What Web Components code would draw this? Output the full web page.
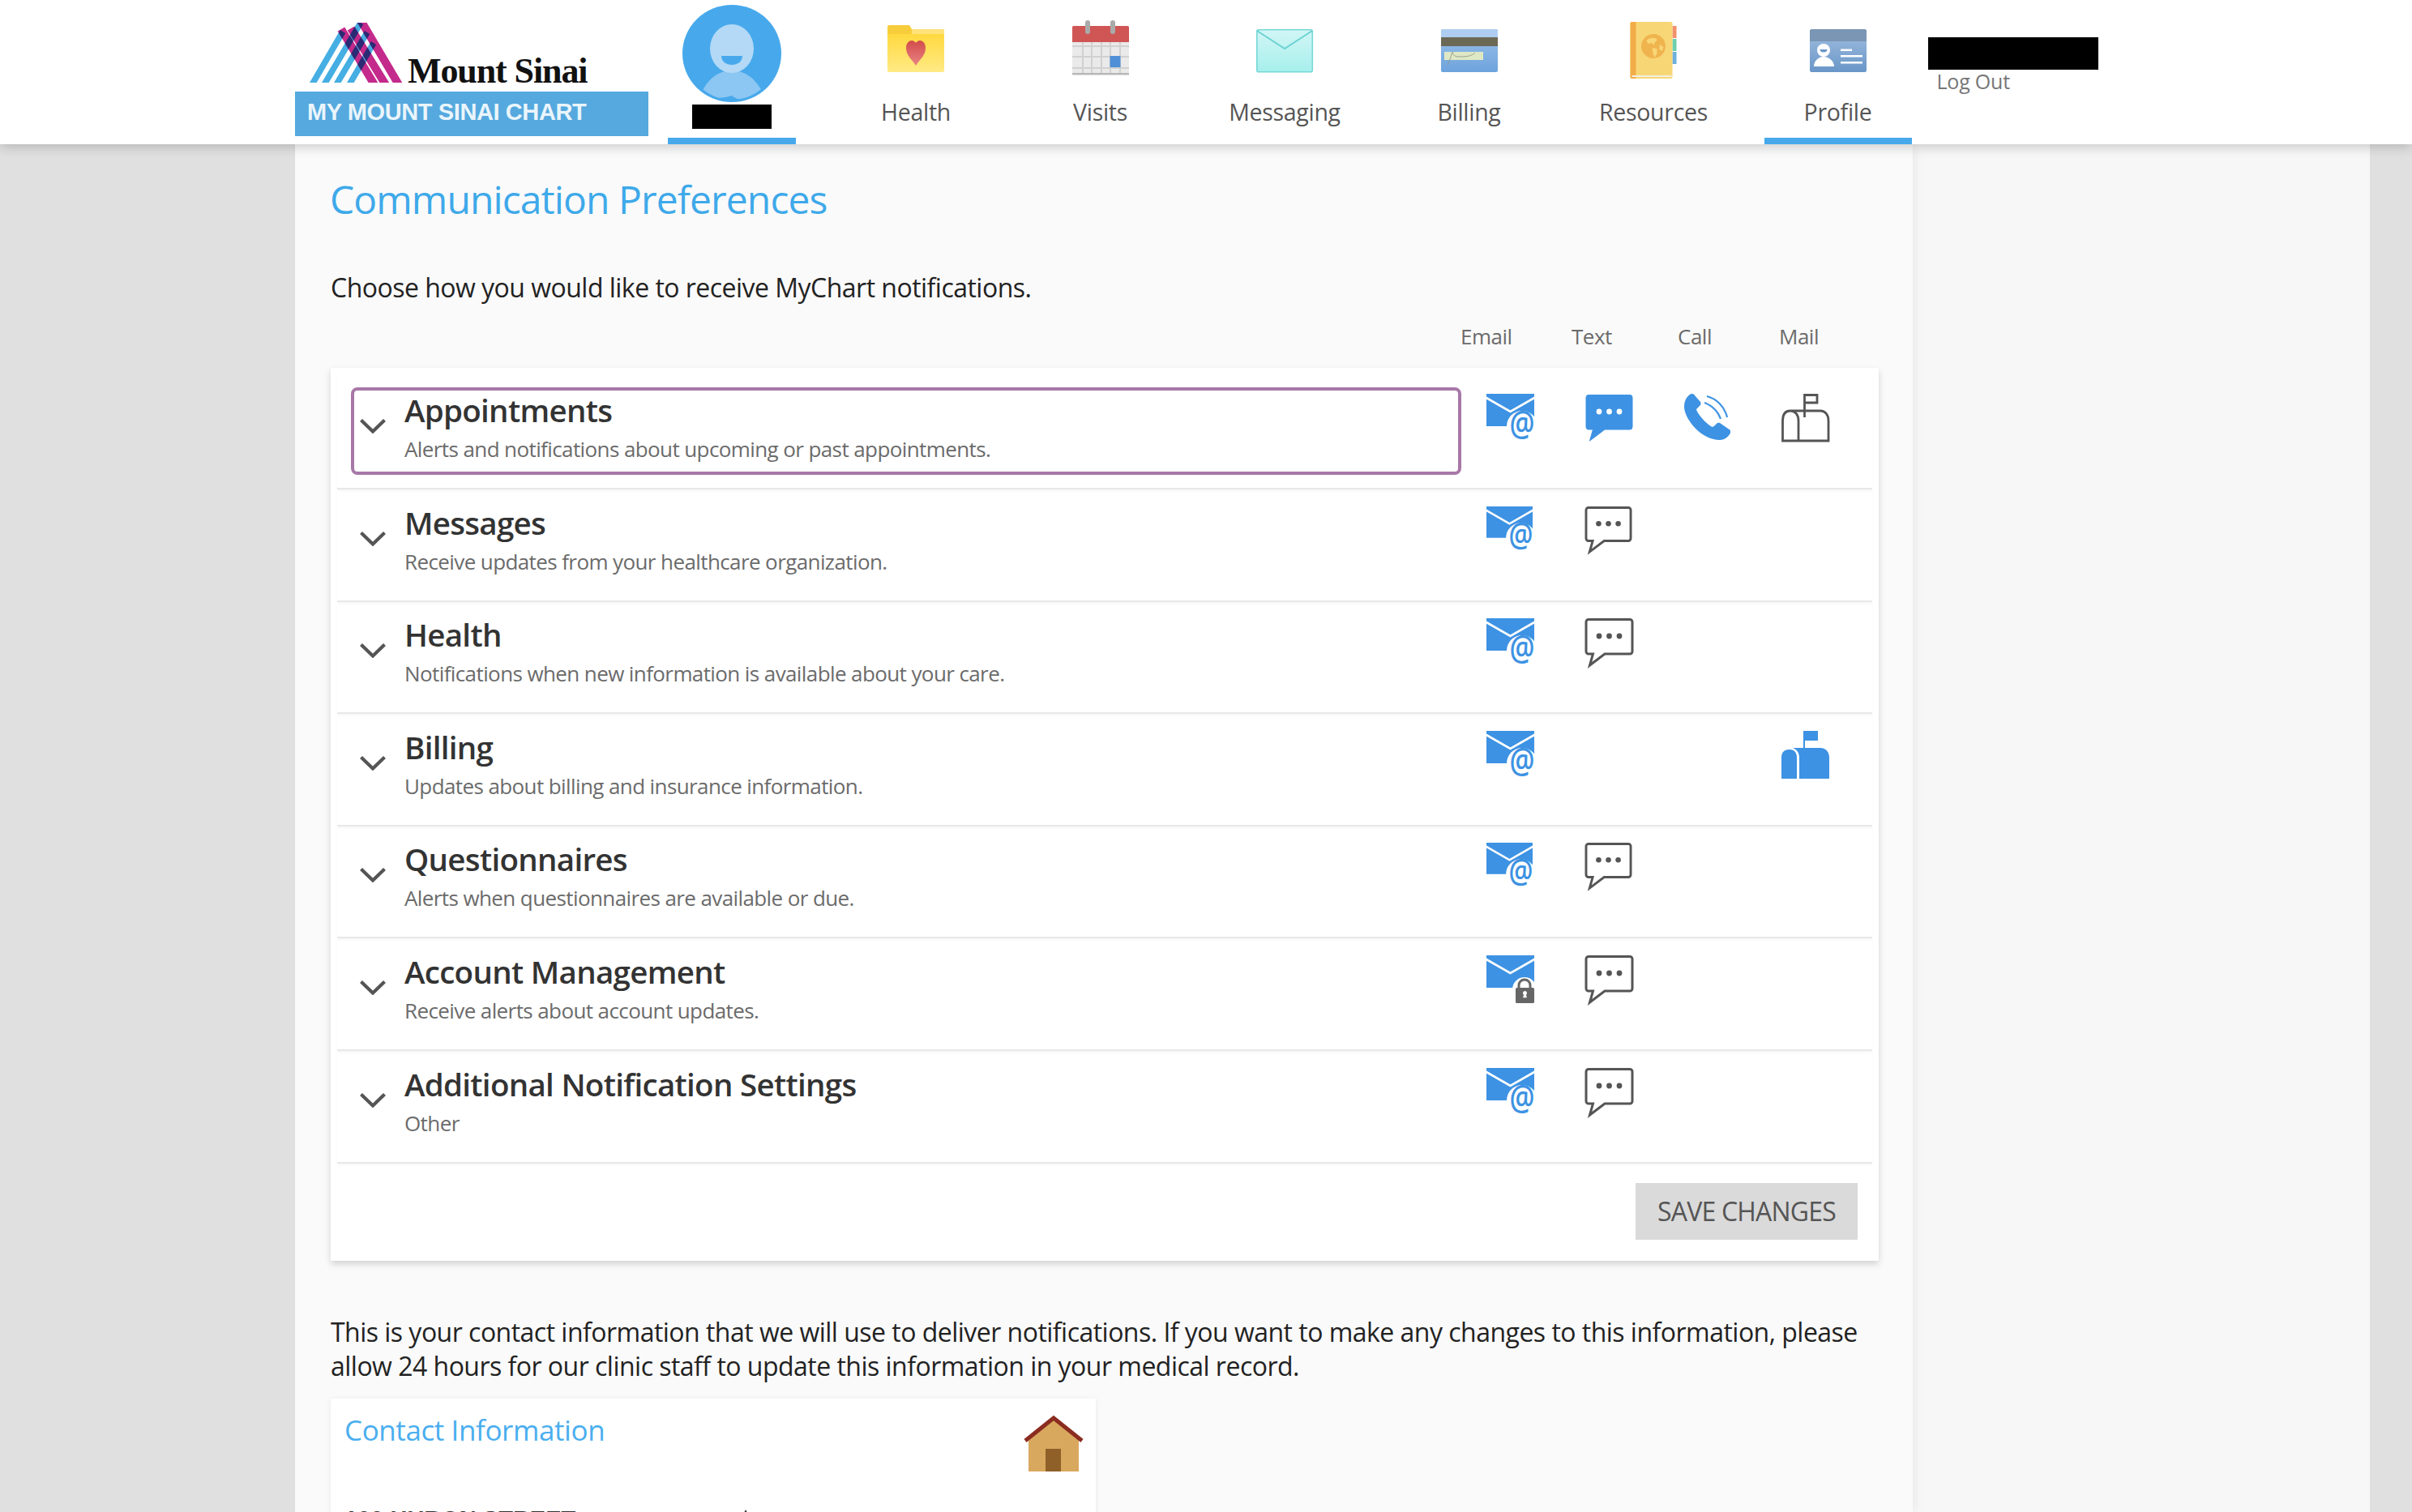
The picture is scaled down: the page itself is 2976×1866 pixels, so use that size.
<!DOCTYPE html>
<html lang="en">
<head>
<meta charset="utf-8">
<title>Communication Preferences</title>
<style>
  html, body { margin: 0; height: 1866px; overflow: hidden; background: #e0e0e0; }
  body { font-family: "Open Sans", "Liberation Sans", sans-serif; }
</style>
</head>
<body>
<mc-page>
  <mc-header slot="header"></mc-header>

  <mc-section-title>Communication Preferences</mc-section-title>
  <mc-intro>Choose how you would like to receive MyChart notifications.</mc-intro>
  <mc-channel-heads></mc-channel-heads>

  <mc-prefs-card>
    <mc-pref-row focused heading="Appointments" desc="Alerts and notifications about upcoming or past appointments." icons="email,chat-on,phone,mailbox"></mc-pref-row>
    <mc-pref-row small heading="Messages" desc="Receive updates from your healthcare organization." icons="email,chat"></mc-pref-row>
    <mc-pref-row heading="Health" desc="Notifications when new information is available about your care." icons="email,chat"></mc-pref-row>
    <mc-pref-row heading="Billing" desc="Updates about billing and insurance information." icons="email,,,mailbox-on"></mc-pref-row>
    <mc-pref-row small heading="Questionnaires" desc="Alerts when questionnaires are available or due." icons="email,chat"></mc-pref-row>
    <mc-pref-row heading="Account Management" desc="Receive alerts about account updates." icons="email-lock,chat"></mc-pref-row>
    <mc-pref-row heading="Additional Notification Settings" desc="Other" icons="email,chat"></mc-pref-row>
  </mc-prefs-card>

  <mc-note>This is your contact information that we will use to deliver notifications. If you want to make any changes to this information, please allow 24 hours for our clinic staff to update this information in your medical record.</mc-note>

  <mc-contact-card heading="Contact Information" address="100 HURON STREET"></mc-contact-card>
</mc-page>

<script>
const BLUE = '#3d92e3'
const GREY = '#555'

function envelope () {
  return `<path fill="${BLUE}" d="M0 0H59V40H0Z"/><path fill="none" stroke="#fff" stroke-width="2.6" d="M-1 4.5L29.5 22L60 4.5"/>`
}

function chatShape () {
  return 'M4 1.5H55A3 3 0 0 1 58 4.5V41A3 3 0 0 1 55 44H24L5.5 58L9.5 44H4A3 3 0 0 1 1 41V4.5A3 3 0 0 1 4 1.5Z'
}

// all channel icons share a 60x60 box
const CHANNEL_ICONS = {
  email: `${envelope()}<circle cx="44" cy="40" r="19" fill="#fff"/><text transform="translate(44 51.500) scale(.96 1.200)" text-anchor="middle" font-family="Open Sans" font-weight="600" font-size="36" fill="${BLUE}">@</text>`,
  'email-lock': `${envelope()}<circle cx="47" cy="42" r="15" fill="#fff"/><path fill="none" stroke="#666" stroke-width="3" d="M40 42V37A7 7 0 0 1 54 37V42"/><rect x="36" y="40" width="23" height="19" rx="1.5" fill="#666"/><path fill="#fff" d="M47.5 44a2.6 2.6 0 0 1 1.5 4.7l.9 3.6h-4.8l.9-3.6a2.6 2.6 0 0 1 1.5-4.7z"/>`,
  chat: `<path fill="#fff" stroke="${GREY}" stroke-width="3" d="${chatShape()}"/><circle cx="17" cy="22" r="3.4" fill="${GREY}"/><circle cx="29.5" cy="22" r="3.4" fill="${GREY}"/><circle cx="42" cy="22" r="3.4" fill="${GREY}"/>`,
  'chat-on': `<path fill="${BLUE}" stroke="${BLUE}" stroke-width="1" d="${chatShape()}"/><circle cx="17" cy="22" r="3.4" fill="#fff"/><circle cx="29.5" cy="22" r="3.4" fill="#fff"/><circle cx="42" cy="22" r="3.4" fill="#fff"/>`,
  phone: `<path fill="${BLUE}" d="M9 0C5 1 0 7 0 16C0 30 20 57 44 57C50 57 56 52 57 48L57 45L44 36C42 35 40 36 38 39L35 41C29 39 16 25 15 19L18 16C21 13 21 12 20 10L13 2C12 0 10 0 9 0Z"/><path fill="none" stroke="${BLUE}" stroke-width="2.2" d="M28 3C40 6 50 16 53 29M25 11C34 14 42 22 45 31"/>`,
  mailbox: `<path fill="none" stroke="${GREY}" stroke-width="2.8" d="M1.5 58V33C1.5 25 5 21 11 21C17 21 21 26 21 33V58ZM11 21H48C54 21 58 26 58 33V58H21M28.5 29V1.5H44V11H28.5"/>`,
  'mailbox-on': `<path fill="${BLUE}" d="M0 59V33C0 25 5 23 10 23C16 23 19 27 19 33V59ZM22 59V33C22 27 19 23 14 21H27V0H45V12H29V21H48C55 21 59 26 59 33V59Z"/>`
}

// nav icons sit on a 70x80 canvas so their tops and bottoms keep their own offsets
const NAV_ICONS = {
  health: `<defs><linearGradient id="f" x1="0" y1="0" x2="0" y2="1"><stop offset="0" stop-color="#ffd93f"/><stop offset="1" stop-color="#ffea85"/></linearGradient><linearGradient id="h" x1="0" y1="0" x2="0" y2="1"><stop offset="0" stop-color="#d24b4b"/><stop offset="1" stop-color="#ea8484"/></linearGradient></defs>
    <path fill="#f8cd3b" d="M2 11H27L30 16H68A2 2 0 0 1 70 18V28H0V13A2 2 0 0 1 2 11Z"/><path fill="url(#f)" d="M0 22H70V67A2 2 0 0 1 68 69H2A2 2 0 0 1 0 67Z"/><rect y="16" x="30" width="40" height="6" fill="#ffe27a"/>
    <path fill="url(#h)" d="M35 61C31 54 23 49 23 39C23 33 27 30 30 30C33 30 35 33 35 33C35 33 37 30 40 30C43 30 47 33 47 39C47 49 39 54 35 61Z"/>`,
  visits: `<rect x="0" y="12" width="70" height="60" fill="#eaeaea"/><path fill="#d1d1d1" d="M0 36H70V38H0ZM0 49H70V51H0ZM0 63H70V65H0ZM12 32H14V72H12ZM23 32H25V72H23ZM35 32H37V72H35ZM46 32H48V72H46ZM58 32H60V72H58Z"/><rect y="70" width="70" height="2.5" fill="#b8b8b8"/>
    <path fill="#d05656" d="M2 12H68A2 2 0 0 1 70 14V32H0V14A2 2 0 0 1 2 12Z"/><rect x="16" y="5" width="6" height="17" rx="3" fill="#aaa"/><rect x="47" y="5" width="6" height="17" rx="3" fill="#aaa"/><rect x="46.500" y="49" width="13" height="14" fill="#4f8fd6"/>`,
  messaging: `<defs><linearGradient id="e" x1="0" y1="0" x2="0" y2="1"><stop offset="0" stop-color="#d2f6f6"/><stop offset="1" stop-color="#a6efec"/></linearGradient></defs>
    <rect x=".8" y="16.800" width="68.500" height="52" rx="2" fill="url(#e)" stroke="#76d8d6" stroke-width="1.600"/><path fill="none" stroke="#6bd3d2" stroke-width="2" d="M1 18L35 40L69 18"/>`,
  billing: `<defs><linearGradient id="c" x1="0" y1="0" x2="0" y2="1"><stop offset="0" stop-color="#9cc2ec"/><stop offset="1" stop-color="#6ea3dc"/></linearGradient></defs>
    <rect y="16" width="70" height="53" rx="2" fill="url(#c)"/><path fill="#aecdf0" d="M2 16H68A2 2 0 0 1 70 18V26H0V18A2 2 0 0 1 2 16Z"/><rect y="26" width="70" height="11" fill="#6c6856"/><rect x="4" y="44" width="48" height="10" fill="#dfe8c4"/><path fill="none" stroke="#8d9a8a" stroke-width=".9" d="M8 60C12 52 13 46 14 44C15 48 16 50 24 50C32 50 38 49 42 45"/>`,
  resources: `<g transform="translate(6.500 0)"><rect x="52" y="12" width="5" height="15" fill="#f2906a"/><rect x="52" y="28" width="5" height="15" fill="#6dd0ac"/><rect x="52" y="44" width="5" height="15" fill="#6db0dc"/>
    <path fill="#f7d676" d="M2 7H50A2 2 0 0 1 52 9V75A2 2 0 0 1 50 77H2A2 2 0 0 1 0 75V9A2 2 0 0 1 2 7Z"/><path fill="#f2ad48" d="M2 7H7V77H2A2 2 0 0 1 0 75V9A2 2 0 0 1 2 7Z"/><rect x="2" y="73" width="49" height="2" fill="#f1efe6"/><circle cx="28.500" cy="37" r="15" fill="#f0b44e"/><path fill="#f7d676" d="M20 30C24 26 31 26 33 29L30 33L29 36L27 33L22 34ZM27 39L33 40L33 46L30 51L28 46ZM36 35L41 38L39 43L36 41Z"/></g>`,
  profile: `<defs><linearGradient id="p" x1="0" y1="0" x2="0" y2="1"><stop offset="0" stop-color="#a2bfe0"/><stop offset="1" stop-color="#6996c8"/></linearGradient></defs>
    <rect y="16" width="70" height="53" rx="2.500" fill="url(#p)"/><path fill="#7a96b4" d="M2.500 16H67.500A2.500 2.500 0 0 1 70 18.500V31H0V18.500A2.500 2.500 0 0 1 2.500 16Z"/>
    <circle cx="17" cy="42" r="8" fill="#fff"/><path fill="#6996c8" d="M12.500 41H21.500A4.500 3.500 0 0 1 12.500 41Z"/><path fill="#fff" d="M5 62C5 56 10 50 17 50C24 50 30 56 30 62Z"/><path fill="#fff" d="M38 40.500H52V43H38ZM38 48H65V50.500H38ZM38 56H65V58.500H38Z"/>`
}

class McIcon extends HTMLElement {
  constructor () {
    super()
    this.shadow = this.attachShadow({ mode: 'open' })
  }

  connectedCallback () {
    const name = this.getAttribute('name')
    const nav = this.hasAttribute('nav')
    const viewBox = nav ? '0 0 70 80' : '0 0 59 59'
    this.shadow.innerHTML = /* html */ `
      <style>
        :host { display: block; line-height: 0; }
        svg { display: block; width: 100%; height: 100%; overflow: visible; }
      </style>
      <svg viewBox="${viewBox}" preserveAspectRatio="xMidYMid meet">${(nav ? NAV_ICONS : CHANNEL_ICONS)[name]}</svg>
    `
  }
}

class McLogo extends HTMLElement {
  constructor () {
    super()
    this.attachShadow({ mode: 'open' }).innerHTML = /* html */ `
      <style>
        :host { display: block; width: 436px; height: 168px; }
        .top { display: flex; align-items: flex-end; height: 113px; padding-left: 17px; box-sizing: border-box; }
        svg { display: block; width: 116px; height: 76px; margin-bottom: 9px; }
        .name { font: bold 44px/1 "Liberation Serif", serif; color: #111; letter-spacing: -1.1px; margin: 0 0 3px 6px; }
        .band { height: 55px; background: #55a9de; color: #eaf5fb; font: bold 29px/50px "Liberation Sans", sans-serif; padding-left: 15px; letter-spacing: -.4px; }
      </style>
      <div class="top">
        <svg viewBox="0 0 116 76">
          <defs>
            <clipPath id="base"><rect width="116" height="74"/></clipPath>
            <mask id="blues" maskUnits="userSpaceOnUse" x="0" y="0" width="116" height="76">
              <path fill="none" stroke="#fff" stroke-width="7.5" d="M3 78L42 11M18 78L64 0M33 78L72 12M49 78L80 25"/>
            </mask>
          </defs>
          <g clip-path="url(#base)">
            <path fill="none" stroke="#45aee3" stroke-width="7.5" d="M3 78L42 11M18 78L64 0M33 78L72 12M49 78L80 25"/>
            <path fill="none" stroke="#c42a8b" stroke-width="10" d="M40 8L83 80M52 7L97 80M64 -3L113 80"/>
            <path mask="url(#blues)" fill="none" stroke="#2b2a74" stroke-width="10" d="M40 8L83 80M52 7L97 80M64 -3L113 80"/>
          </g>
        </svg>
        <span class="name">Mount Sinai</span>
      </div>
      <div class="band">MY MOUNT SINAI CHART</div>
    `
  }
}

class McAvatarTab extends HTMLElement {
  constructor () {
    super()
    this.attachShadow({ mode: 'open' }).innerHTML = /* html */ `
      <style>
        :host { display: flex; flex-direction: column; align-items: center; width: 158px; height: 178px; padding-top: 6px; box-sizing: border-box; }
        svg { display: block; width: 122px; height: 120px; }
        .redact { width: 98px; height: 30px; background: #000; margin-top: 3px; }
        .bar { width: 100%; height: 8px; margin-top: auto; background: #47a9ec; }
      </style>
      <svg viewBox="0 0 122 120">
        <defs><clipPath id="round"><circle cx="61" cy="60" r="57"/></clipPath></defs>
        <ellipse cx="61" cy="60" rx="61" ry="60" fill="#47a9ec"/>
        <path clip-path="url(#round)" fill="#8cc6f2" d="M22 112C30 92 44 81 61 81C78 81 92 92 101 112C90 120 70 120 61 112C50 116 32 116 22 112Z"/>
        <ellipse cx="61" cy="54" rx="27" ry="30" fill="#b3d9f6"/>
        <path d="M48 63H74C74 70 68 74 61 74C54 74 48 70 48 63Z" fill="#47a9ec"/>
      </svg>
      <div class="redact"></div>
      <div class="bar"></div>
    `
  }
}

class McNavItem extends HTMLElement {
  constructor () {
    super()
    this.shadow = this.attachShadow({ mode: 'open' })
  }

  connectedCallback () {
    const active = this.hasAttribute('active')
    this.shadow.innerHTML = /* html */ `
      <style>
        :host { display: flex; flex-direction: column; align-items: center; width: 182px; height: 178px; padding-top: 20px; box-sizing: border-box; }
        mc-icon { width: 70px; height: 80px; }
        .label { font-size: 28.5px; line-height: 40px; color: #555; margin-top: 18px; letter-spacing: -.3px; }
        .bar { width: 100%; height: 8px; margin-top: auto; background: ${active ? '#47a9ec' : 'transparent'}; }
      </style>
      <mc-icon nav name="${this.getAttribute('icon')}"></mc-icon>
      <div class="label"><slot></slot></div>
      <div class="bar"></div>
    `
  }
}

class McHeader extends HTMLElement {
  constructor () {
    super()
    this.attachShadow({ mode: 'open' }).innerHTML = /* html */ `
      <style>
        :host { display: flex; height: 178px; background: #fff; padding-left: 364px; position: relative; z-index: 2; box-shadow: 0 3px 14px rgba(0, 0, 0, .2); }
        mc-avatar-tab { margin-left: 24px; }
        nav { display: flex; gap: 45.5px; margin-left: 57px; }
        .user { margin-left: 20px; padding-top: 46px; }
        .redact { width: 210px; height: 40px; background: #000; }
        .logout { font-size: 25px; line-height: 34px; color: #777; padding-left: 11px; margin-top: -3px; letter-spacing: -.2px; }
      </style>
      <mc-logo></mc-logo>
      <mc-avatar-tab></mc-avatar-tab>
      <nav>
        <mc-nav-item icon="health">Health</mc-nav-item>
        <mc-nav-item icon="visits">Visits</mc-nav-item>
        <mc-nav-item icon="messaging">Messaging</mc-nav-item>
        <mc-nav-item icon="billing">Billing</mc-nav-item>
        <mc-nav-item icon="resources">Resources</mc-nav-item>
        <mc-nav-item icon="profile" active>Profile</mc-nav-item>
      </nav>
      <div class="user">
        <div class="redact"></div>
        <div class="logout">Log Out</div>
      </div>
    `
  }
}

class McPage extends HTMLElement {
  constructor () {
    super()
    this.attachShadow({ mode: 'open' }).innerHTML = /* html */ `
      <style>
        :host { display: block; height: 1866px; overflow: hidden; }
        .columns { display: flex; height: 1688px; }
        .gutter { width: 364px; background: #e0e0e0; }
        main { width: 1996px; box-sizing: border-box; background: #fafafa; padding: 38px 42px 0 44px; position: relative; z-index: 1; box-shadow: 4px 0 10px rgba(0, 0, 0, .05); }
        aside { width: 564px; background: #f7f7f7; }
        .edge { width: 52px; background: #e0e0e0; }
      </style>
      <slot name="header"></slot>
      <div class="columns">
        <div class="gutter"></div>
        <main><slot></slot></main>
        <aside></aside>
        <div class="edge"></div>
      </div>
    `
  }
}

class McSectionTitle extends HTMLElement {
  constructor () {
    super()
    this.attachShadow({ mode: 'open' }).innerHTML = /* html */ `
      <style>
        :host { display: block; font-size: 48px; line-height: 60px; color: #3ea9ea; letter-spacing: -.9px; margin-left: -1px; }
      </style>
      <slot></slot>
    `
  }
}

class McIntro extends HTMLElement {
  constructor () {
    super()
    this.attachShadow({ mode: 'open' }).innerHTML = /* html */ `
      <style>
        :host { display: block; margin-top: 58px; font-size: 32px; line-height: 42px; color: #222; letter-spacing: -.52px; }
      </style>
      <slot></slot>
    `
  }
}

class McChannelHeads extends HTMLElement {
  constructor () {
    super()
    this.attachShadow({ mode: 'open' }).innerHTML = /* html */ `
      <style>
        :host { display: grid; grid-template-columns: 137px 131px 125px auto; margin: 21px 0 21px 1394px; font-size: 26px; line-height: 36px; color: #6b6b6b; letter-spacing: -.5px; }
      </style>
      <span>Email</span><span>Text</span><span>Call</span><span>Mail</span>
    `
  }
}

class McPrefRow extends HTMLElement {
  constructor () {
    super()
    this.shadow = this.attachShadow({ mode: 'open' })
  }

  connectedCallback () {
    const icons = this.getAttribute('icons').split(',')
    const size = this.hasAttribute('small') ? 57 : 59
    const cells = [0, 1, 2, 3].map(i => {
      const name = icons[i]
      return `<div class="cell">${name ? `<mc-icon name="${name}"></mc-icon>` : ''}</div>`
    }).join('')

    this.shadow.innerHTML = /* html */ `
      <style>
        :host { display: flex; align-items: flex-start; height: 138.6px; box-sizing: border-box; margin: 0 8px; border-bottom: 2px solid #e8e8e8; box-shadow: 0 2px 3px rgba(0, 0, 0, .04); }
        .head { display: flex; box-sizing: border-box; width: 1370px; height: 108px; margin: 12.5px 0 0 17px; border: 4px solid ${this.hasAttribute('focused') ? '#a877a8' : 'transparent'}; border-radius: 8px; }
        svg.chevron { flex: none; width: 32px; height: 18px; margin: 35px 0 0 7px; }
        .text { margin: -2px 0 0 23px; }
        h3 { margin: 0; font-size: 38.5px; line-height: 52px; font-weight: 600; color: #333; letter-spacing: -.7px; }
        p { margin: 4px 0 0; font-size: 26px; line-height: 36px; color: #6b6b6b; letter-spacing: -.6px; }
        .channels { display: grid; grid-template-columns: 122px 122px 120px 60px; margin: 20.5px 0 0 31px; }
        mc-icon { width: ${size}px; height: ${size}px; }
      </style>
      <div class="head">
        <svg class="chevron" viewBox="0 0 32 18"><path fill="none" stroke="#555" stroke-width="4.2" d="M1.500 1.500L16 15.500L30.500 1.500"/></svg>
        <div class="text">
          <h3>${this.getAttribute('heading')}</h3>
          <p>${this.getAttribute('desc')}</p>
        </div>
      </div>
      <div class="channels">${cells}</div>
    `
  }
}

class McPrefsCard extends HTMLElement {
  constructor () {
    super()
    this.attachShadow({ mode: 'open' }).innerHTML = /* html */ `
      <style>
        :host { display: block; background: #fff; padding-top: 11.5px; box-shadow: 0 4px 8px rgba(0, 0, 0, .16); }
        footer { display: flex; justify-content: flex-end; padding: 24.5px 26px 26px 0; }
        button { all: unset; box-sizing: border-box; width: 274px; height: 70px; background: #dadada; color: #555; font-family: inherit; font-size: 32px; line-height: 68px; text-align: center; letter-spacing: -.8px; }
      </style>
      <slot></slot>
      <footer><button>SAVE CHANGES</button></footer>
    `
  }
}

class McNote extends HTMLElement {
  constructor () {
    super()
    this.attachShadow({ mode: 'open' }).innerHTML = /* html */ `
      <style>
        :host { display: block; margin-top: 67px; font-size: 32px; line-height: 42px; color: #222; letter-spacing: -.52px; }
      </style>
      <slot></slot>
    `
  }
}

class McContactCard extends HTMLElement {
  constructor () {
    super()
    this.shadow = this.attachShadow({ mode: 'open' })
  }

  connectedCallback () {
    this.shadow.innerHTML = /* html */ `
      <style>
        :host { display: block; width: 944px; height: 240px; margin-top: 19px; background: #fff; box-shadow: 0 1px 6px rgba(0, 0, 0, .08); padding: 18px 15px 0 17px; box-sizing: border-box; }
        .top { display: flex; justify-content: space-between; align-items: flex-start; }
        h2 { margin: -2px 0 0; font-weight: 400; font-size: 35px; line-height: 46px; color: #4aaeef; letter-spacing: -.4px; }
        svg { display: block; width: 74px; height: 69px; margin-top: 3px; }
        .address { position: relative; margin-top: 39px; width: 520px; font: bold 29px/40px "Liberation Sans", sans-serif; color: #333; }
        .mark { position: absolute; left: 490px; top: 8px; width: 0; height: 0; border: 5px solid transparent; border-top: 0; border-bottom: 10px solid #333; }
      </style>
      <div class="top">
        <h2>${this.getAttribute('heading')}</h2>
        <svg viewBox="0 0 74 69">
          <path fill="#d9a85f" d="M6 30L37 5L68 30V69H6Z"/>
          <rect x="27" y="41" width="19" height="28" fill="#8f6028"/>
          <path fill="none" stroke="#8a2c20" stroke-width="5" d="M2 31L37 3L72 31" stroke-linejoin="miter"/>
        </svg>
      </div>
      <div class="address">${this.getAttribute('address')}<span class="mark"></span></div>
    `
  }
}

customElements.define('mc-icon', McIcon)
customElements.define('mc-logo', McLogo)
customElements.define('mc-avatar-tab', McAvatarTab)
customElements.define('mc-nav-item', McNavItem)
customElements.define('mc-header', McHeader)
customElements.define('mc-page', McPage)
customElements.define('mc-section-title', McSectionTitle)
customElements.define('mc-intro', McIntro)
customElements.define('mc-channel-heads', McChannelHeads)
customElements.define('mc-pref-row', McPrefRow)
customElements.define('mc-prefs-card', McPrefsCard)
customElements.define('mc-note', McNote)
customElements.define('mc-contact-card', McContactCard)
</script>
</body>
</html>
